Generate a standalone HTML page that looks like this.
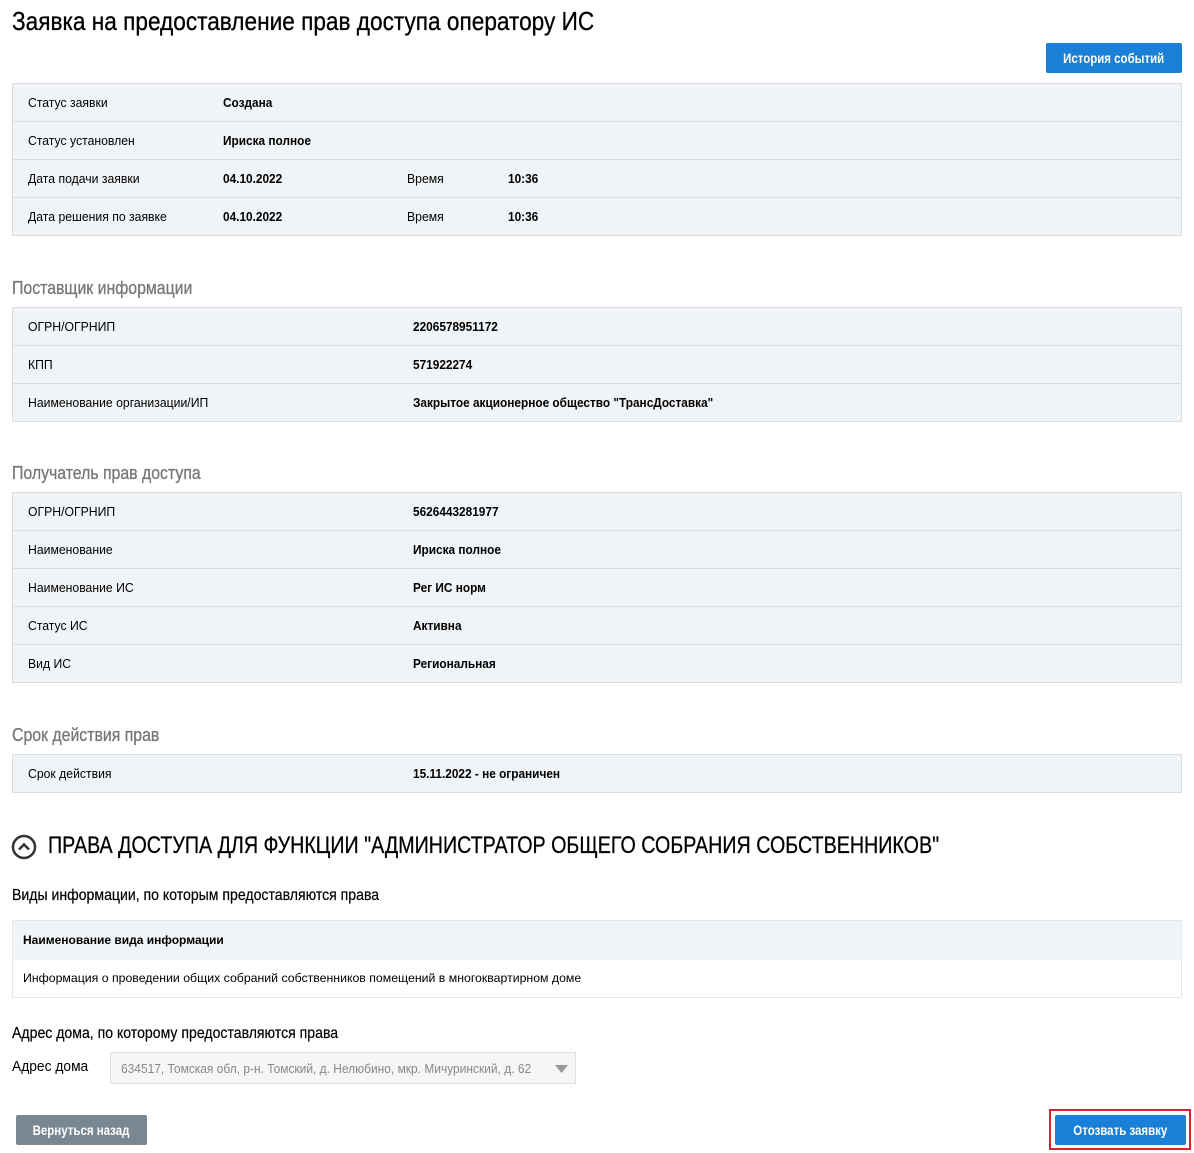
<!DOCTYPE html>
<html><head><meta charset="utf-8"><style>
*{box-sizing:border-box;margin:0;padding:0}
body{width:1194px;height:1153px;background:#fff;font-family:"Liberation Sans",sans-serif;color:#000;position:relative;overflow:hidden}
.a{position:absolute}
.s{transform-origin:0 0}
h1{position:absolute;left:12px;top:6px;font-size:26px;font-weight:normal;white-space:nowrap;transform:scaleX(.87);transform-origin:0 0;-webkit-text-stroke:.3px #000}
.btn{position:absolute;color:#fff;font-size:14px;font-weight:bold;text-align:center;border-radius:2px;white-space:nowrap}
.btn i{display:inline-block;font-style:normal;transform:scaleX(.82)}
.tbl{position:absolute;left:12px;width:1170px;border:1px solid #d9dde2;background:#f1f4f7}
.row{height:38px;border-top:1px solid #d9dde2;position:relative;font-size:13px}
.row:first-child{border-top:none;height:37px}
.row span,.row b{position:absolute;top:11px;white-space:nowrap;transform-origin:0 0;transform:scaleX(.94)}
.row b{transform:scaleX(.91)}
.st{position:absolute;left:12px;font-size:18px;color:#777;white-space:nowrap;transform:scaleX(.88);transform-origin:0 0;-webkit-text-stroke:.3px #777}
</style></head><body>
<h1>Заявка на предоставление прав доступа оператору ИС</h1>
<div class="btn" style="left:1046px;top:43px;width:136px;height:30px;line-height:30px;background:#1a7fd6"><i>История событий</i></div>

<div class="tbl" style="top:83px">
<div class="row"><span style="left:15px">Статус заявки</span><b style="left:210px">Создана</b></div>
<div class="row"><span style="left:15px">Статус установлен</span><b style="left:210px">Ириска полное</b></div>
<div class="row"><span style="left:15px">Дата подачи заявки</span><b style="left:210px">04.10.2022</b><span style="left:394px">Время</span><b style="left:495px">10:36</b></div>
<div class="row"><span style="left:15px">Дата решения по заявке</span><b style="left:210px">04.10.2022</b><span style="left:394px">Время</span><b style="left:495px">10:36</b></div>
</div>

<div class="st" style="top:278px">Поставщик информации</div>
<div class="tbl" style="top:307px">
<div class="row"><span style="left:15px">ОГРН/ОГРНИП</span><b style="left:400px">2206578951172</b></div>
<div class="row"><span style="left:15px">КПП</span><b style="left:400px">571922274</b></div>
<div class="row"><span style="left:15px">Наименование организации/ИП</span><b style="left:400px">Закрытое акционерное общество "ТрансДоставка"</b></div>
</div>

<div class="st" style="top:463px">Получатель прав доступа</div>
<div class="tbl" style="top:492px">
<div class="row"><span style="left:15px">ОГРН/ОГРНИП</span><b style="left:400px">5626443281977</b></div>
<div class="row"><span style="left:15px">Наименование</span><b style="left:400px">Ириска полное</b></div>
<div class="row"><span style="left:15px">Наименование ИС</span><b style="left:400px">Рег ИС норм</b></div>
<div class="row"><span style="left:15px">Статус ИС</span><b style="left:400px">Активна</b></div>
<div class="row"><span style="left:15px">Вид ИС</span><b style="left:400px">Региональная</b></div>
</div>

<div class="st" style="top:725px">Срок действия прав</div>
<div class="tbl" style="top:754px">
<div class="row"><span style="left:15px">Срок действия</span><b style="left:400px">15.11.2022 - не ограничен</b></div>
</div>

<svg class="a" style="left:11px;top:834px" width="26" height="26" viewBox="0 0 26 26"><circle cx="13" cy="13" r="11" fill="none" stroke="#333" stroke-width="2.5"/><path d="M8 15.5 L13 10.5 L18 15.5" fill="none" stroke="#333" stroke-width="2.5"/></svg>
<div class="a s" style="left:48px;top:832px;font-size:24px;white-space:nowrap;transform:scaleX(.82);-webkit-text-stroke:.3px #000">ПРАВА ДОСТУПА ДЛЯ ФУНКЦИИ "АДМИНИСТРАТОР ОБЩЕГО СОБРАНИЯ СОБСТВЕННИКОВ"</div>
<div class="a s" style="left:12px;top:887px;font-size:16px;white-space:nowrap;transform:scaleX(.88);-webkit-text-stroke:.2px #000">Виды информации, по которым предоставляются права</div>
<div class="a" style="left:12px;top:920px;width:1170px;height:78px;border:1px solid #e3e6ea;background:#fff">
<div style="height:39px;background:#f1f4f7;font-size:12px;font-weight:bold;padding:12px 0 0 10px;white-space:nowrap">Наименование вида информации</div>
<div style="font-size:12.3px;padding:11px 0 0 10px;white-space:nowrap">Информация о проведении общих собраний собственников помещений в многоквартирном доме</div>
</div>
<div class="a s" style="left:12px;top:1025px;font-size:16px;white-space:nowrap;transform:scaleX(.88);-webkit-text-stroke:.2px #000">Адрес дома, по которому предоставляются права</div>
<div class="a s" style="left:12px;top:1058px;font-size:15px;white-space:nowrap;transform:scaleX(.92)">Адрес дома</div>
<div class="a" style="left:110px;top:1052px;width:466px;height:32px;border:1px solid #dcdfe3;background:#f5f6f7">
<div class="a s" style="left:10px;top:8px;font-size:13px;color:#888;white-space:nowrap;transform:scaleX(.92)">634517, Томская обл, р-н. Томский, д. Нелюбино, мкр. Мичуринский, д. 62</div>
<svg class="a" style="left:444px;top:12px" width="13" height="8"><path d="M0 0H13L6.5 8Z" fill="#999"/></svg></div>
<div class="btn" style="left:16px;top:1115px;width:131px;height:30px;line-height:30px;background:#7a8791"><i>Вернуться назад</i></div>
<div class="a" style="left:1049px;top:1109px;width:142px;height:41px;border:2px solid #d9232e"></div>
<div class="btn" style="left:1055px;top:1115px;width:131px;height:30px;line-height:30px;background:#1a7fd6"><i>Отозвать заявку</i></div>
</body></html>
